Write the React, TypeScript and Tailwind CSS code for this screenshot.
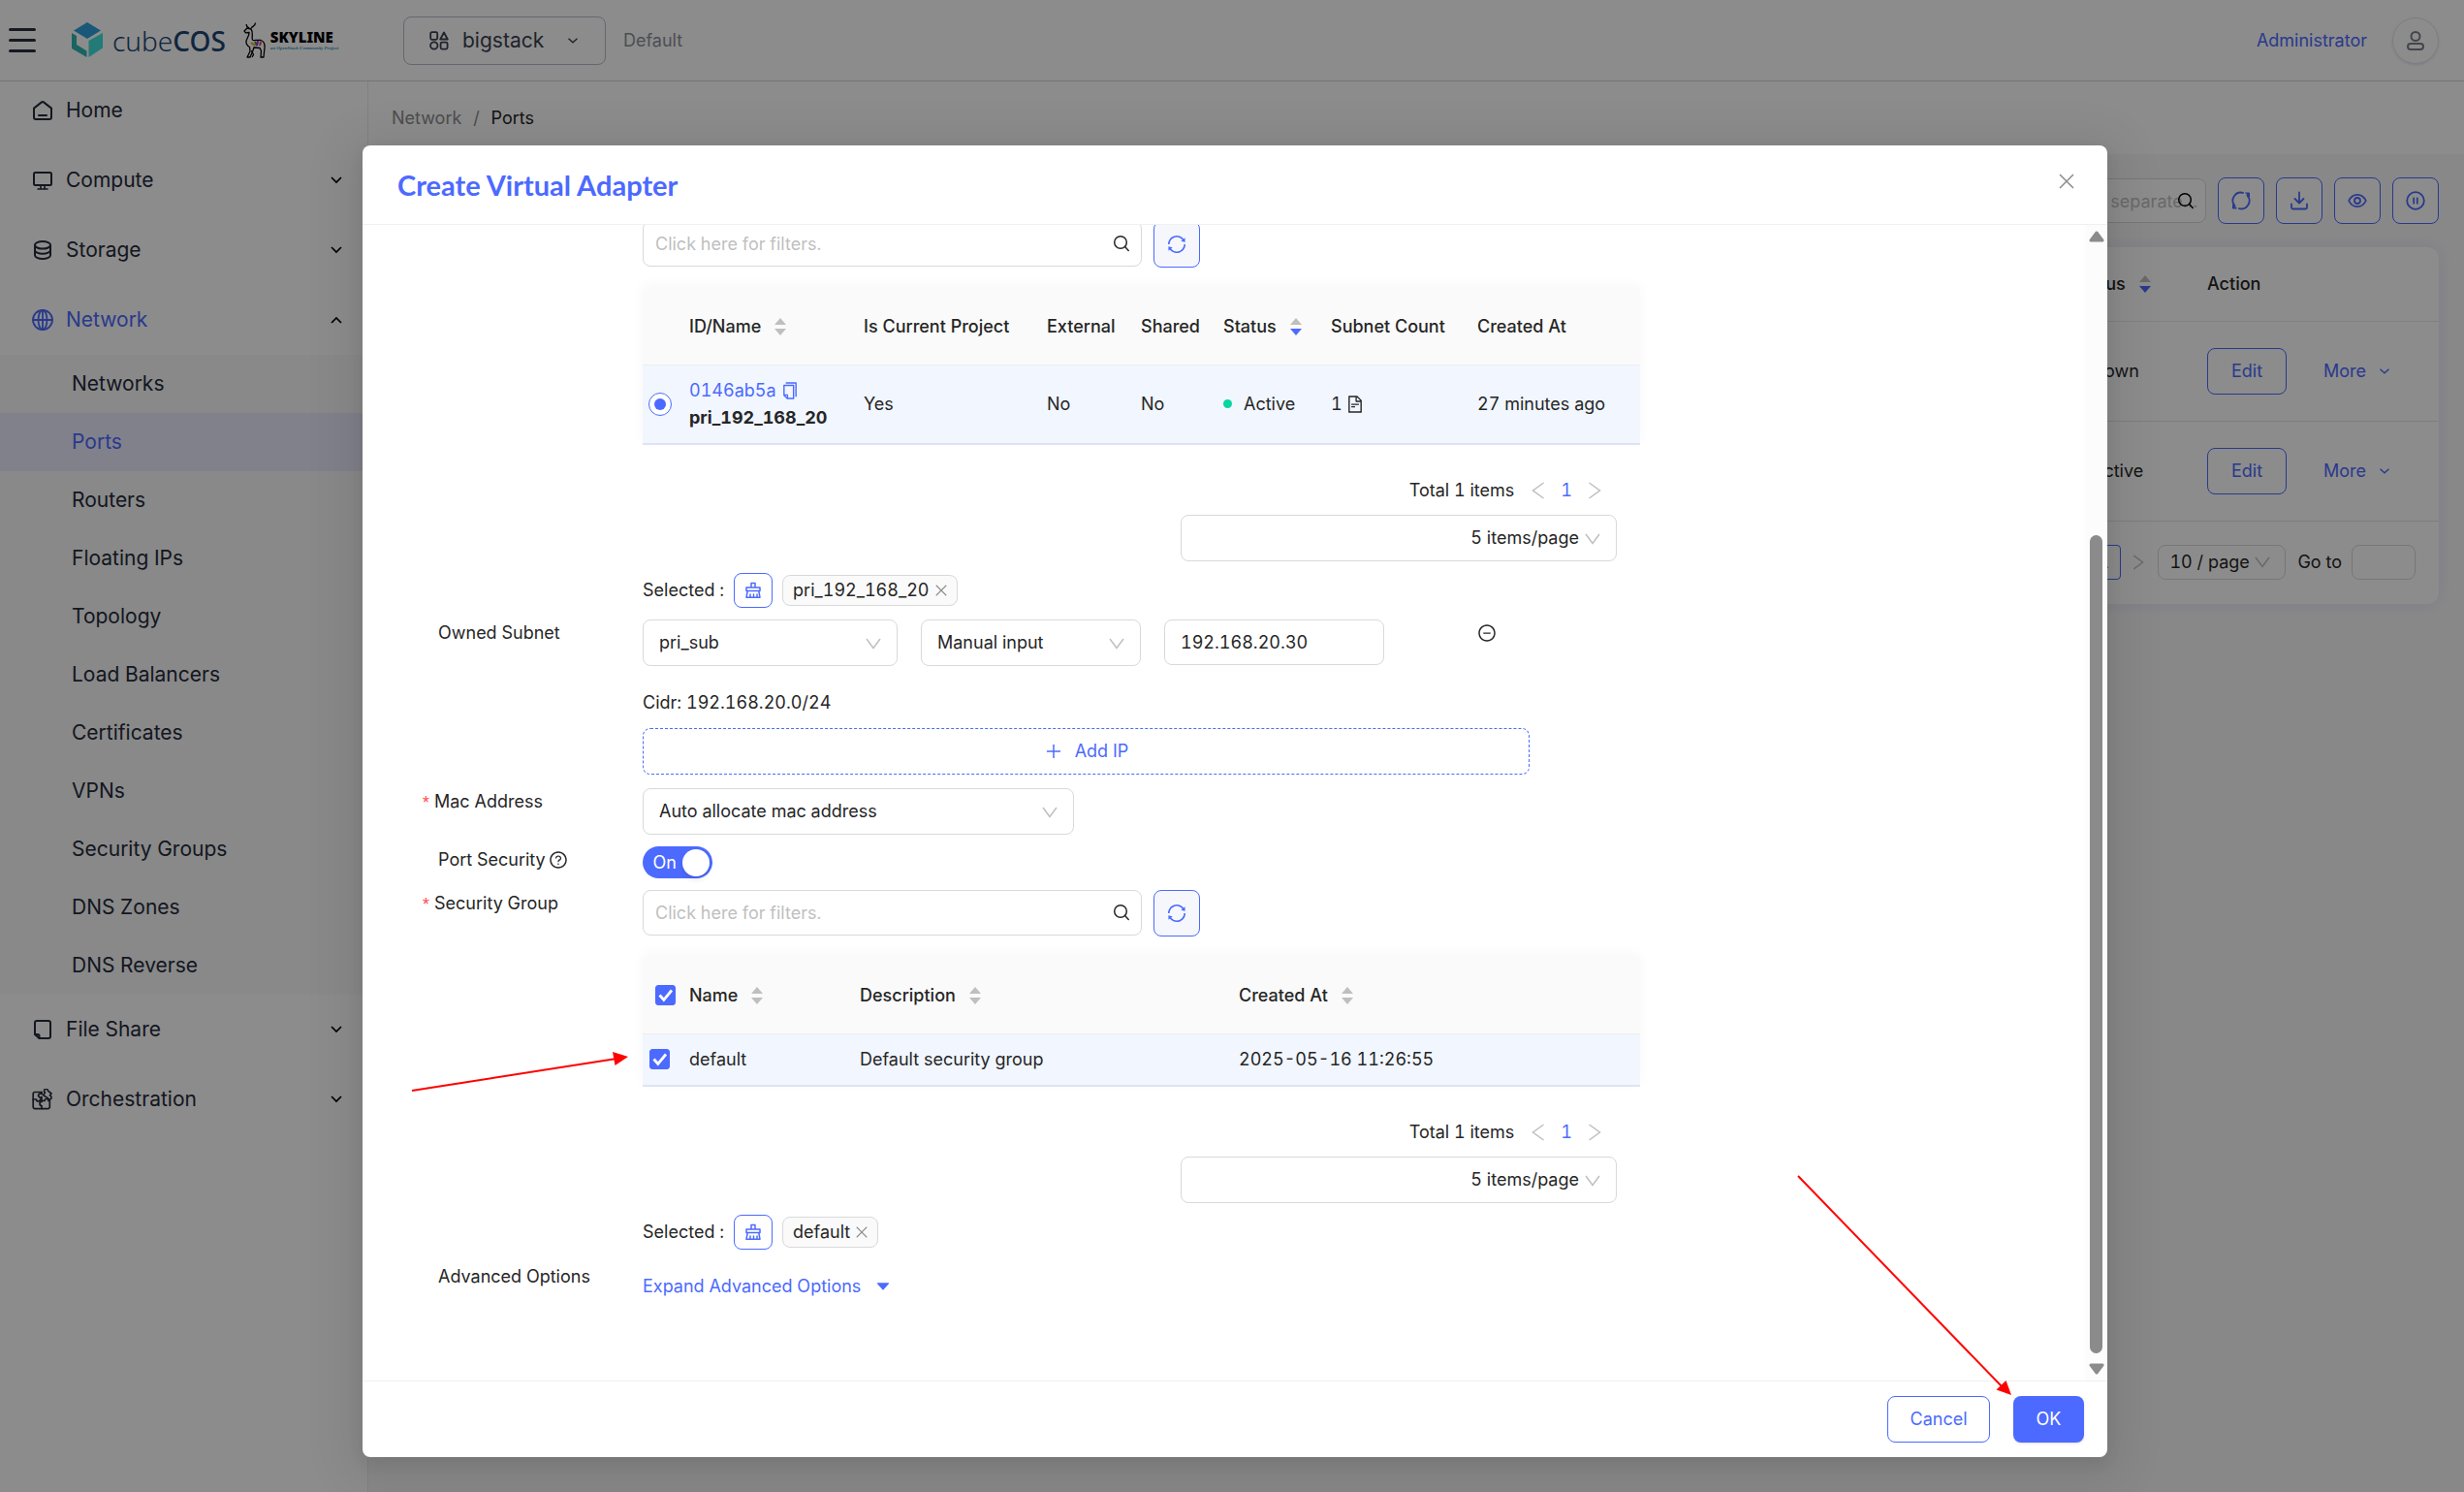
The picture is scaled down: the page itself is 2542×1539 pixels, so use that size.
import React from "react";
import {
  AiFillCaretDown,
  AiOutlineCopy,
  AiOutlineFileText,
  AiOutlineMinusCircle,
  AiOutlinePlus,
  AiOutlineQuestionCircle,
  AiOutlineSync,
} from "react-icons/ai";

type IconProps = { className?: string };

function Line({ className = "", children, box = 20, width = 2 }: { className?: string; children: React.ReactNode; box?: number; width?: number }) {
  return (
    <svg
      className={`shrink-0 ${className}`}
      width={box}
      height={box}
      viewBox={`0 0 ${box} ${box}`}
      fill="none"
      stroke="currentColor"
      strokeWidth={width}
      strokeLinecap="round"
      strokeLinejoin="round"
      aria-hidden="true"
    >
      {children}
    </svg>
  );
}

const HomeIcon = () => (
  <Line>
    <path d="M1 7.6 9 1.4q1-.8 2 0L19 7.6V17a2 2 0 0 1-2 2H3a2 2 0 0 1-2-2z" />
    <path d="M6 15h8" />
  </Line>
);
const MonitorIcon = () => (
  <Line>
    <rect x="1" y="2" width="18" height="13" rx="1.5" />
    <path d="M8 15.5v3M12 15.5v3M5 19h10" strokeWidth="1.6" />
  </Line>
);
const DiskIcon = () => (
  <Line>
    <ellipse cx="10" cy="4.8" rx="8" ry="3.8" />
    <path d="M2 5v10.2C2 17.300 5.600 19 10 19s8-1.700 8-3.800V5M2 10c0 2.100 3.600 3.800 8 3.800s8-1.700 8-3.800" />
  </Line>
);
const GlobeIcon = () => (
  <Line box={22} width={1.8}>
    <circle cx="11" cy="11" r="10" />
    <ellipse cx="11" cy="11" rx="4.500" ry="10" />
    <path d="M1 11h20M11 1v20" />
  </Line>
);
const NoteIcon = () => (
  <Line>
    <path d="M4 1h12a2 2 0 0 1 2 2v14a2 2 0 0 1-2 2H6.500L2 15V3a2 2 0 0 1 2-2z" />
    <path d="M2 15h3a1.500 1.500 0 0 1 1.500 1.500V19" />
  </Line>
);
const PuzzleIcon = () => (
  <Line box={22} width={1.700}>
    <path d="M10 3.500H3A1.800 1.800 0 0 0 1.200 5.300v13.500a1.800 1.800 0 0 0 1.800 1.800h13.500a1.800 1.800 0 0 0 1.800-1.800V12" />
    <path d="M1.200 11h3.300a2 2 0 1 0 4 0H10v-2.500a2 2 0 1 1 0-3V3.500M10 11v2.500a2 2 0 1 0 0 4v3M10 12.500h3a2 2 0 1 1 4 0h1.300" />
    <path d="m11.500 6.500 2-2.500a2 2 0 1 1 3-1.800l3.500 2.800-1.600 2a2 2 0 1 1-2.200 2.600z" />
  </Line>
);
const UserIcon = () => (
  <Line width={2}>
    <circle cx="10" cy="5.500" r="4.500" />
    <rect x="2" y="13" width="16" height="6" rx="3" />
  </Line>
);
const ShapesIcon = () => (
  <Line width={1.800}>
    <rect x="1.200" y="1.200" width="7" height="7.600" rx="1.500" />
    <path d="M15 1.500 18.800 8.500h-7.600z" />
    <circle cx="4.800" cy="15" r="3.700" />
    <rect x="11.600" y="11.600" width="7" height="7" rx="1.500" />
  </Line>
);
const RefreshIcon = () => (
  <Line width={1.800}>
    <path d="M12 1.900A8.300 8.300 0 0 0 3.500 15.300M8 18.100A8.300 8.300 0 0 0 16.500 4.700" />
    <path d="M1.500 14.500v3.500h3.500zM18.500 5.500V2h-3.500z" fill="currentColor" strokeWidth="1" />
  </Line>
);
const DownloadIcon = () => (
  <Line width={1.800}>
    <path d="M10 1.500v11M5.500 8l4.500 4.500L14.500 8M2 13.500V17a1.500 1.500 0 0 0 1.500 1.500h13A1.500 1.500 0 0 0 18 17v-3.500" />
  </Line>
);
const EyeIcon = () => (
  <Line width={1.800}>
    <path d="M1.200 10C3 6 6.200 3.800 10 3.800s7 2.200 8.800 6.200c-1.800 4-5 6.200-8.800 6.200S3 14 1.200 10z" />
    <circle cx="10" cy="10" r="3" />
  </Line>
);
const PauseIcon = () => (
  <Line width={1.800}>
    <circle cx="10" cy="10" r="8.800" />
    <path d="M8.200 7.300v5.400M11.800 7.300v5.400" />
  </Line>
);
const SearchIcon = ({ className = "" }: IconProps) => (
  <Line box={18} width={1.500} className={className}>
    <circle cx="8" cy="8" r="6.300" />
    <path d="m12.600 12.600 3.600 3.800" />
  </Line>
);
const BroomIcon = () => (
  <Line box={18} width={1.500}>
    <path d="M7 6V1.500h4V6M2 6h14v3.500H2zM3.200 9.500 2 16.300h14l-1.200-6.800M6 16v-3M9.500 16v-3M13 16v-3" />
  </Line>
);
const CloseIcon = ({ className = "" }: IconProps) => (
  <svg className={`shrink-0 ${className}`} viewBox="0 0 16 16" fill="none" stroke="currentColor" strokeWidth="1.500" aria-hidden="true">
    <path d="m1 1 14 14M15 1 1 15" />
  </svg>
);
const ArrowIcon = ({ className = "" }: IconProps) => (
  <svg className={`shrink-0 ${className}`} width="14" height="18" viewBox="0 0 14 18" fill="none" stroke="currentColor" strokeWidth="1.500" aria-hidden="true">
    <path d="m1.500 1 11 8-11 8" />
  </svg>
);
const DownIcon = ({ className = "" }: IconProps) => (
  <svg className={`shrink-0 ${className}`} width="16" height="12" viewBox="0 0 16 12" fill="none" stroke="currentColor" strokeWidth="1.500" aria-hidden="true">
    <path d="m1 1 7 9.500L15 1" />
  </svg>
);
const Chevron = ({ className = "" }: IconProps) => (
  <svg className={`shrink-0 ${className}`} width="12" height="8" viewBox="0 0 12 8" fill="none" stroke="currentColor" strokeWidth="1.700" aria-hidden="true">
    <path d="m1 1 5 5 5-5" />
  </svg>
);
const SmallChevron = () => (
  <svg className="shrink-0" width="10" height="6" viewBox="0 0 10 6" fill="none" stroke="currentColor" strokeWidth="1.400" aria-hidden="true">
    <path d="m.5.700 4.500 4 4.500-4" />
  </svg>
);

function Sorter({ active = false }: { active?: boolean }) {
  return (
    <svg className="shrink-0" width="12" height="20" viewBox="0 0 12 20" aria-hidden="true">
      <path d="M6 1 12 8H0z" fill="#bfbfbf" />
      <path d="M6 19 0 12h12z" fill={active ? "#4c6aff" : "#bfbfbf"} />
    </svg>
  );
}

function Brand() {
  return (
    <div className="flex items-center">
      <svg width="32" height="37" viewBox="0 0 32 37" aria-hidden="true">
        <path d="M16 0 30 8.500 16 17 2 8.500z" fill="#2fa0dc" />
        <path d="M0 11 5 14v9l10.500 6.500V36L0 27z" fill="#2fb5b0" />
        <path d="M17.500 19 32 11v15.500L17.500 36z" fill="#3fe0d8" />
      </svg>
      <span className="ml-2.5 font-['Noto_Sans'] text-[28px] leading-9 font-light text-[#1c4672]">
        cube<span className="font-medium">COS</span>
      </span>
      <svg className="ml-[18px]" width="24" height="37" viewBox="0 0 24 37" fill="none" stroke="#000" strokeWidth="1.300" strokeLinejoin="round" aria-hidden="true">
        <path d="M4 6 1 9l1.500 1.800L6 10.500c.5 3-2.500 6-3 9-.4 3 1.500 5 3.500 6L7 30l-3 6h3l3-7 1-3 6 .5 1.500 3L18 36h3l.8-8c.8-5-.5-8.500-3.800-9.500-3.500-.8-7.500 1-8.500-.5-1-2 1-8-1.500-11z" />
        <path d="M6 6c-2-1-3-2-2.800-4M8 6c1.500-2 4.500-2 4.500-5.500M8.500 29l2 4.500L9 36" />
        <path d="m8 21 4 3" stroke="#f59e0b" strokeWidth="2" />
        <path d="m12 20 2 4" stroke="#16a34a" strokeWidth="2" />
        <path d="m15 19-1 5" stroke="#7c3aed" strokeWidth="2" />
        <path d="m18 20-1 4" stroke="#ef4444" strokeWidth="2" />
      </svg>
      <div className="ml-1 flex flex-col">
        <span className="font-['Noto_Sans'] text-[15px] leading-4 font-black text-black">SKYLINE</span>
        <span className="font-['Liberation_Serif'] text-[5px] leading-2 font-bold text-[#2f93bd] italic">an OpenStack Community Project</span>
      </div>
    </div>
  );
}

const submenu = ["Networks", "Ports", "Routers", "Floating IPs", "Topology", "Load Balancers", "Certificates", "VPNs", "Security Groups", "DNS Zones", "DNS Reverse"];

const menu = [
  { label: "Home", icon: <HomeIcon />, leaf: true },
  { label: "Compute", icon: <MonitorIcon /> },
  { label: "Storage", icon: <DiskIcon /> },
  { label: "Network", icon: <GlobeIcon />, open: true },
  { label: "File Share", icon: <NoteIcon /> },
  { label: "Orchestration", icon: <PuzzleIcon /> },
];

function Sidebar() {
  return (
    <nav className="w-[380px] shrink-0 border-r border-[#ececf0] bg-white text-[21px] text-[#252b3a]">
      <ul className="flex flex-col gap-3">
        {menu.map((m) => (
          <li key={m.label} className={m.open ? "-mb-1.5" : ""}>
            <button className={`flex h-15 w-full items-center pr-[26px] pl-8 ${m.open ? "text-[#4c6aff]" : ""}`}>
              <span className="flex w-6 justify-center">{m.icon}</span>
              <span className="ml-3 flex-1 text-left">{m.label}</span>
              {!m.leaf && <Chevron className={`text-black ${m.open ? "rotate-180" : ""}`} />}
            </button>
            {m.open && (
              <ul className="mt-1.5 bg-[#fafafa]">
                {submenu.map((s) => (
                  <li key={s}>
                    <a href="#" className={`flex h-15 items-center pl-[74px] ${s === "Ports" ? "bg-[#ebebff] text-[#4c6aff]" : ""}`}>
                      {s}
                    </a>
                  </li>
                ))}
              </ul>
            )}
          </li>
        ))}
      </ul>
    </nav>
  );
}

function TopBar() {
  return (
    <header className="flex h-[84px] items-center border-b border-[#d5d5da] bg-white">
      <button aria-label="Toggle menu" className="ml-[9px] flex w-7 flex-col gap-2">
        <span className="h-[3px] rounded-full bg-[#2b2f3d]" />
        <span className="h-[3px] rounded-full bg-[#2b2f3d]" />
        <span className="h-[3px] rounded-full bg-[#2b2f3d]" />
      </button>
      <div className="ml-[37px] w-[342px]">
        <Brand />
      </div>
      <button className="flex h-[50px] w-[209px] items-center rounded-lg border border-[#b9bacb] pr-7 pl-[26px] text-[#3b4150]">
        <ShapesIcon />
        <span className="ml-3.5 flex-1 text-left text-[21px]">bigstack</span>
        <SmallChevron />
      </button>
      <span className="ml-[18px] text-[#8b8e9b]">Default</span>
      <a href="#" className="ml-auto text-[#4c6aff]">Administrator</a>
      <button aria-label="Account" className="mr-[26px] ml-[26px] flex size-12 items-center justify-center rounded-full border border-[#e3e4ef] text-[#7b7f8f] shadow-sm">
        <UserIcon />
      </button>
    </header>
  );
}

const toolButtons = [
  { label: "Refresh", icon: <RefreshIcon /> },
  { label: "Download", icon: <DownloadIcon /> },
  { label: "Columns", icon: <EyeIcon /> },
  { label: "Pause", icon: <PauseIcon /> },
];

function PortsPage() {
  return (
    <main className="flex min-w-0 flex-1 flex-col bg-[#f8f8f9]">
      <div className="h-[75px] bg-white pt-6 pl-6 leading-7 text-[#8c8c8c]">
        Network <span className="mx-[7px]">/</span> <span className="text-[#262626]">Ports</span>
      </div>
      <div className="flex flex-col gap-6 py-6 pr-[26px] pl-6">
        <div className="flex items-center justify-end gap-3">
          <div className="relative w-[297px]">
            <input
              aria-label="Filter ports"
              placeholder="Multiple filter tags are separated by enter"
              className="h-[46px] w-full rounded-lg border border-[#d9d9d9] bg-white pr-1.5 pl-2 text-ellipsis placeholder:text-[#bfbfbf]"
            />
            <SearchIcon className="absolute top-3.5 right-3 text-black" />
          </div>
          {toolButtons.map((b) => (
            <button key={b.label} aria-label={b.label} className="flex size-12 items-center justify-center rounded-lg border border-[#4c6aff] bg-white text-[#4c6aff]">
              {b.icon}
            </button>
          ))}
        </div>
        <div className="rounded-xl bg-white shadow-[0_0_16px_rgba(90,100,220,0.12)]">
          <table className="w-full table-fixed text-left">
            <colgroup>
              <col />
              <col className="w-[139px]" />
              <col className="w-[239px]" />
            </colgroup>
            <thead>
              <tr className="h-[76px] border-b border-[#ececec]">
                <th className="pl-4 font-medium">ID/Name</th>
                <th className="font-medium">
                  <span className="flex items-center gap-3.5">Status <Sorter active /></span>
                </th>
                <th className="font-medium">Action</th>
              </tr>
            </thead>
            <tbody>
              {["Down", "Active"].map((s) => (
                <tr key={s} className="h-[103px] border-b border-[#e2e4f4]">
                  <td />
                  <td>
                    <span className="flex items-center gap-3"><i className="size-2 rounded-full bg-[#06d6a0]" />{s}</span>
                  </td>
                  <td>
                    <div className="flex items-center">
                      <button className="h-12 w-[82px] rounded-lg border border-[#4c6aff] text-[#4c6aff]">Edit</button>
                      <button className="ml-[38px] flex items-center gap-3.5 text-[#4c6aff]">More <SmallChevron /></button>
                    </div>
                  </td>
                </tr>
              ))}
            </tbody>
          </table>
          <div className="flex h-[85px] items-center justify-end pr-6">
            <button aria-label="Page 1" className="h-9 w-9 rounded-sm border border-[#4c6aff] text-[#4c6aff]">1</button>
            <ArrowIcon className="ml-3 w-3 text-[#bfbfbf]" />
            <div className="relative ml-3.5 w-[132px]">
              <select aria-label="Page size" className="h-9 w-full appearance-none rounded-lg border border-[#d9d9d9] bg-white pl-[11px]">
                <option>10 / page</option>
              </select>
              <DownIcon className="pointer-events-none absolute top-3 right-4 text-[#bfbfbf]" />
            </div>
            <label htmlFor="goto" className="ml-3">Go to</label>
            <input id="goto" className="ml-2.5 h-9 w-[66px] rounded-lg border border-[#d9d9d9] bg-white" />
          </div>
        </div>
      </div>
    </main>
  );
}

function Select({ label, value, width, right = false }: { label: string; value: string; width: string; right?: boolean }) {
  return (
    <div className={`relative ${width}`}>
      <select
        aria-label={label}
        defaultValue={value}
        className={`h-12 w-full appearance-none rounded-lg border border-[#d9d9d9] bg-white pl-4 ${right ? "pr-[38px] [text-align-last:right]" : "pr-10"}`}
      >
        <option>{value}</option>
      </select>
      <DownIcon className="pointer-events-none absolute top-[19px] right-[17px] text-[#bfbfbf]" />
    </div>
  );
}

function FilterBar({ label }: { label: string }) {
  return (
    <div className="flex items-start gap-3">
      <div className="relative w-[515px]">
        <input aria-label={label} placeholder="Click here for filters." className="h-[47px] w-full rounded-lg border border-[#d9d9d9] bg-white px-3 placeholder:text-[#bfbfbf]" />
        <SearchIcon className="absolute top-3.5 right-3 text-[#262626]" />
      </div>
      <button type="button" aria-label={`Refresh ${label}`} className="flex size-12 items-center justify-center rounded-lg border border-[#4c6aff] bg-[#f5f7fc] text-[#4c6aff]">
        <AiOutlineSync className="size-[22px]" />
      </button>
    </div>
  );
}

function Pager() {
  return (
    <div className="mt-[33px] flex flex-col items-end gap-[11px] pr-6">
      <div className="flex h-7 items-center pr-4">
        <span>Total 1 items</span>
        <button type="button" aria-label="Previous page" className="ml-[18px]"><ArrowIcon className="rotate-180 text-[#bfbfbf]" /></button>
        <button type="button" className="mx-4 text-[#4c6aff]">1</button>
        <button type="button" aria-label="Next page"><ArrowIcon className="text-[#bfbfbf]" /></button>
      </div>
      <Select label="Items per page" value="5 items/page" width="w-[450px]" right />
    </div>
  );
}

function SelectedBar({ value }: { value: string }) {
  return (
    <div className="mt-3 flex h-9 items-center">
      <span>Selected :</span>
      <button type="button" aria-label="Clear selection" className="ml-2.5 flex h-9 w-10 items-center justify-center rounded-lg border border-[#4c6aff] text-[#4c6aff]">
        <BroomIcon />
      </button>
      <span className="ml-2.5 flex h-8 items-center gap-1.5 rounded-lg border border-[#d9d9d9] bg-[#fafafa] px-2.5">
        {value}
        <button type="button" aria-label={`Remove ${value}`}><CloseIcon className="size-3 text-[#8c8c8c]" /></button>
      </span>
    </div>
  );
}

function Field({ label, required = false, help = false, children }: { label: string; required?: boolean; help?: boolean; children: React.ReactNode }) {
  return (
    <div className="flex">
      <div className={`flex h-7 w-[229px] shrink-0 items-center ${required ? "" : "pl-[18px]"}`}>
        {required && <span className="mr-1 w-2.5 pt-1 font-['Liberation_Mono'] text-[#ff4d4f]">*</span>}
        <span>{label}</span>
        {help && <AiOutlineQuestionCircle className="ml-[3px] size-5" />}
      </div>
      <div className="max-w-[1029px] min-w-0 flex-1">{children}</div>
    </div>
  );
}

function Check({ label }: { label: string }) {
  return (
    <span className="relative block size-[21px]">
      <input type="checkbox" defaultChecked aria-label={label} className="block size-[21px] appearance-none rounded-[3px] border border-[#d9d9d9] checked:border-[#4c6aff] checked:bg-[#4c6aff]" />
      <svg className="pointer-events-none absolute inset-0" width="21" height="21" viewBox="0 0 21 21" fill="none" stroke="#fff" strokeWidth="2.800" aria-hidden="true">
        <path d="m4.500 10.500 4.300 4.800L17 5.500" />
      </svg>
    </span>
  );
}

const headShadow = "mt-[22px] shadow-[0_-4px_12px_rgba(0,0,0,0.035)]";

function NetworkTable() {
  return (
    <div className={headShadow}>
      <table className="w-full table-fixed text-left">
        <colgroup>
          <col className="w-12" />
          <col className="w-[180px]" />
          <col className="w-[189px]" />
          <col className="w-[97px]" />
          <col className="w-[85px]" />
          <col className="w-[111px]" />
          <col className="w-[151px]" />
          <col />
        </colgroup>
        <thead>
          <tr className="h-[78px] border-b border-[#ededed] bg-[#fafafa]">
            <th />
            <th className="font-medium"><span className="flex items-center gap-3.5">ID/Name <Sorter /></span></th>
            <th className="font-medium">Is Current Project</th>
            <th className="font-medium">External</th>
            <th className="font-medium">Shared</th>
            <th className="font-medium"><span className="flex items-center gap-3.5">Status <Sorter active /></span></th>
            <th className="font-medium">Subnet Count</th>
            <th className="font-medium">Created At</th>
          </tr>
        </thead>
        <tbody>
          <tr className="h-[82px] border-b-2 border-[#dfe3f3] bg-[#f1f6ff]">
            <td className="pl-1.5">
              <input
                type="radio"
                name="network"
                defaultChecked
                aria-label="pri_192_168_20"
                className="grid size-6 appearance-none place-content-center rounded-full border border-[#4c6aff] bg-white before:size-3 before:rounded-full before:bg-[#4c6aff] before:content-['']"
              />
            </td>
            <td className="leading-7">
              <span className="flex items-center gap-1 text-[#4c6aff]">
                <a href="#">0146ab5a</a>
                <button type="button" aria-label="Copy ID"><AiOutlineCopy className="size-5" /></button>
              </span>
              <strong className="block font-bold">pri_192_168_20</strong>
            </td>
            <td>Yes</td>
            <td>No</td>
            <td>No</td>
            <td><span className="flex items-center gap-3"><i className="size-[9px] rounded-full bg-[#06d6a0]" />Active</span></td>
            <td><span className="flex items-center gap-[3px]">1 <AiOutlineFileText className="size-5" /></span></td>
            <td>27 minutes ago</td>
          </tr>
        </tbody>
      </table>
    </div>
  );
}

function GroupTable() {
  return (
    <div className={headShadow}>
      <table className="w-full table-fixed text-left">
        <colgroup>
          <col className="w-12" />
          <col className="w-44" />
          <col className="w-[391px]" />
          <col />
        </colgroup>
        <thead>
          <tr className="h-[78px] border-b border-[#ededed] bg-[#fafafa]">
            <th className="pl-[13px]"><Check label="Select all" /></th>
            {["Name", "Description", "Created At"].map((h) => (
              <th key={h} className="font-medium"><span className="flex items-center gap-3.5">{h} <Sorter /></span></th>
            ))}
          </tr>
        </thead>
        <tbody>
          <tr className="h-[54px] border-b-2 border-[#dfe3f3] bg-[#f1f6ff]">
            <td className="pl-[7px]"><Check label="Select default" /></td>
            <td>default</td>
            <td>Default security group</td>
            <td>2025-05-16 11:26:55</td>
          </tr>
        </tbody>
      </table>
    </div>
  );
}

function ScrollTrack() {
  return (
    <div className="flex w-[23px] shrink-0 flex-col items-center bg-[#fcfcfc] py-1.5" aria-hidden="true">
      <svg width="16" height="12" viewBox="0 0 16 12"><path d="M8 2 14 10H2z" fill="#8b8b8b" stroke="#8b8b8b" strokeWidth="3" strokeLinejoin="round" /></svg>
      <div className="flex w-[13px] flex-1 flex-col py-2.5">
        <div className="flex-[292]" />
        <div className="flex-[845] rounded-full bg-[#8b8b8b]" />
      </div>
      <svg width="16" height="12" viewBox="0 0 16 12"><path d="M8 10 14 2H2z" fill="#8b8b8b" stroke="#8b8b8b" strokeWidth="3" strokeLinejoin="round" /></svg>
    </div>
  );
}

function Dialog() {
  return (
    <section
      role="dialog"
      aria-labelledby="dialog-title"
      className="relative flex w-full max-w-[1800px] flex-col rounded-lg bg-white shadow-[0_6px_16px_rgba(0,0,0,0.08),0_9px_48px_16px_rgba(0,0,0,0.08)]"
    >
      <div className="flex h-[82px] shrink-0 items-center justify-between border-b border-[#f0f0f0] px-9">
        <h1 id="dialog-title" className="font-[Lato] text-[29px] leading-9 font-bold text-[#4c6aff]">Create Virtual Adapter</h1>
        <button aria-label="Close" className="-mt-2 -mr-0.5"><CloseIcon className="size-4 text-[#8c8c8c]" /></button>
      </div>
      <div className="flex min-h-0 flex-1">
        <form className="flex min-w-0 flex-1 flex-col gap-3 overflow-hidden pl-15">
          <div className="-mt-1 flex flex-col pl-[229px]">
            <div className="max-w-[1029px]">
              <FilterBar label="Networks" />
              <NetworkTable />
              <Pager />
              <SelectedBar value="pri_192_168_20" />
            </div>
          </div>
          <Field label="Owned Subnet">
            <div className="flex items-start">
              <Select label="Owned subnet" value="pri_sub" width="w-[263px]" />
              <div className="w-6" />
              <Select label="IP allocation" value="Manual input" width="w-[227px]" />
              <div className="w-6" />
              <input aria-label="IP address" defaultValue="192.168.20.30" className="h-[47px] w-[227px] rounded-lg border border-[#d9d9d9] px-4" />
              <button type="button" aria-label="Remove IP" className="mt-1 ml-24"><AiOutlineMinusCircle className="size-5" /></button>
            </div>
            <div className="mt-6 leading-7">Cidr: 192.168.20.0/24</div>
            <button type="button" className="mt-3 mb-0.5 flex h-12 w-full max-w-[915px] items-center justify-center gap-3 rounded-lg border border-dashed border-[#4c6aff] text-[#4c6aff]">
              <AiOutlinePlus className="size-5" />
              Add IP
            </button>
          </Field>
          <Field label="Mac Address" required>
            <Select label="Mac address" value="Auto allocate mac address" width="w-[445px]" />
          </Field>
          <Field label="Port Security" help>
            <label className="relative flex h-[33px] w-[72px] items-center justify-end rounded-full bg-[#4c6aff] pr-[3px] text-white">
              <input type="checkbox" role="switch" defaultChecked className="absolute inset-0 appearance-none" />
              <span className="mr-1.5">On</span>
              <span className="size-7 rounded-full bg-white shadow-md" />
            </label>
          </Field>
          <Field label="Security Group" required>
            <FilterBar label="Security groups" />
            <GroupTable />
            <Pager />
            <SelectedBar value="default" />
          </Field>
          <div className="mt-0.5">
            <Field label="Advanced Options">
              <button type="button" className="flex h-12 items-center gap-3.5 text-[#4c6aff]">
                Expand Advanced Options <AiFillCaretDown className="size-[18px]" />
              </button>
            </Field>
          </div>
        </form>
        <ScrollTrack />
      </div>
      <div className="flex h-[79px] shrink-0 items-center justify-end gap-6 border-t border-[#f0f0f0] px-6">
        <button className="h-12 w-[106px] rounded-lg border border-[#4c6aff] text-[#4c6aff]">Cancel</button>
        <button className="h-12 w-[73px] rounded-lg bg-[#4c6aff] text-white shadow-sm">OK</button>
      </div>
      <svg className="pointer-events-none absolute top-[930px] left-[50px]" width="230" height="50" viewBox="0 0 230 50" aria-hidden="true">
        <path d="M1 45 212 12" stroke="#f00" strokeWidth="2" />
        <path d="M224 10 208 5l2.500 14z" fill="#f00" />
      </svg>
      <svg className="pointer-events-none absolute right-[98px] bottom-[62px]" width="224" height="232" viewBox="0 0 224 232" aria-hidden="true">
        <path d="M3 4 213 221" stroke="#f00" strokeWidth="2" />
        <path d="m223 230-15.500-5.500 10-9.500z" fill="#f00" />
      </svg>
    </section>
  );
}

export default function App() {
  return (
    <div className="relative flex h-screen flex-col overflow-hidden bg-white font-[Inter,sans-serif] text-[18px] leading-7 text-[#262626] tabular-nums">
      <TopBar />
      <div className="flex min-h-0 flex-1">
        <Sidebar />
        <PortsPage />
      </div>
      <div className="absolute inset-0 flex justify-center bg-black/45 pt-[150px] pb-9 pl-1.5">
        <Dialog />
      </div>
    </div>
  );
}
